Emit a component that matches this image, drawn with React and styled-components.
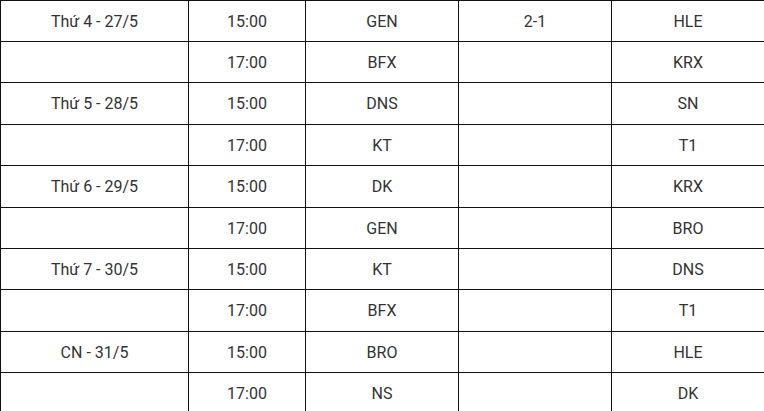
import React from "react";
import styled, { createGlobalStyle } from "styled-components";

const GlobalStyle = createGlobalStyle`
  html, body {
    margin: 0;
    padding: 0;
    background: #ffffff;
    overflow: hidden;
  }
`;

const Schedule = styled.div`
  display: grid;
  grid-template-columns: 188px 117px 153px 153px 153px;
  grid-template-rows: 41px 41px 42px 41px 42px 41px 41px 42px 41px 41px;
  width: 765px;
  border-top: 1px solid #111111;
  border-left: 1px solid #111111;
  font-family: Roboto, "Liberation Sans", sans-serif;
  font-size: 16px;
  color: #333333;
`;

const Cell = styled.div`
  display: flex;
  align-items: center;
  justify-content: center;
  border-right: 1px solid #111111;
  border-bottom: 1px solid #111111;
  white-space: nowrap;
`;

const matches = [
  { day: "Thứ 4 - 27/5", time: "15:00", home: "GEN", score: "2-1", away: "HLE" },
  { day: "", time: "17:00", home: "BFX", score: "", away: "KRX" },
  { day: "Thứ 5 - 28/5", time: "15:00", home: "DNS", score: "", away: "SN" },
  { day: "", time: "17:00", home: "KT", score: "", away: "T1" },
  { day: "Thứ 6 - 29/5", time: "15:00", home: "DK", score: "", away: "KRX" },
  { day: "", time: "17:00", home: "GEN", score: "", away: "BRO" },
  { day: "Thứ 7 - 30/5", time: "15:00", home: "KT", score: "", away: "DNS" },
  { day: "", time: "17:00", home: "BFX", score: "", away: "T1" },
  { day: "CN - 31/5", time: "15:00", home: "BRO", score: "", away: "HLE" },
  { day: "", time: "17:00", home: "NS", score: "", away: "DK" },
];

export default function App() {
  return (
    <>
      <GlobalStyle />
      <Schedule>
        {matches.map((m, i) => (
          <React.Fragment key={i}>
            <Cell>{m.day}</Cell>
            <Cell>{m.time}</Cell>
            <Cell>{m.home}</Cell>
            <Cell>{m.score}</Cell>
            <Cell>{m.away}</Cell>
          </React.Fragment>
        ))}
      </Schedule>
    </>
  );
}
